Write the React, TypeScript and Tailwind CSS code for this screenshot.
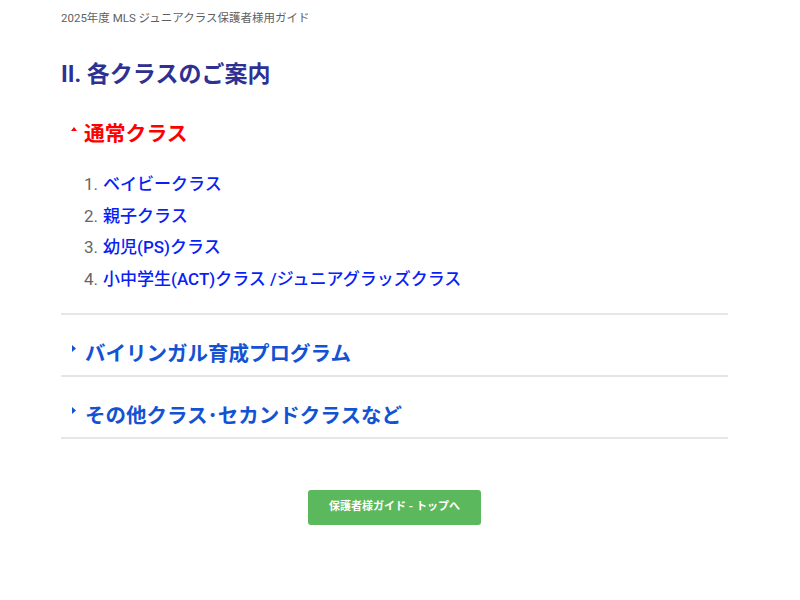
import React from "react";

const font = { fontFamily: 'Roboto, "Noto Sans CJK JP", sans-serif' };

function UpTri() {
  return (
    <svg width="6" height="4" viewBox="0 0 6 4" className="shrink-0">
      <polygon points="3,0 6,4 0,4" fill="#ff0000" />
    </svg>
  );
}
function RightTri() {
  return (
    <svg width="4" height="7" viewBox="0 0 4 7" className="shrink-0">
      <polygon points="0,0 4,3.5 0,7" fill="#1353d3" />
    </svg>
  );
}

export default function App() {
  const items = [
    "ベイビークラス",
    "親子クラス",
    "幼児(PS)クラス",
    "小中学生(ACT)クラス /ジュニアグラッズクラス",
  ];
  return (
    <div className="w-[800px] h-[600px] bg-white" style={font}>
      <div className="ml-[61px] w-[667px]">
        <div className="pt-[10px] text-[11.5px] leading-[16px] font-normal text-[#5f5f5f]">
          2025年度 MLS ジュニアクラス保護者様用ガイド
        </div>
        <h1 className="mt-[34px] text-[23px] leading-[30px] font-bold text-[#2e3192]">
          II. 各クラスのご案内
        </h1>

        <div className="mt-[29px] border-b-2 border-[#e6e6e6]">
          <div className="flex items-center gap-[7px] pl-[10px] pb-[8px]">
            <div className="-mt-[10px]"><UpTri /></div>
            <span className="text-[20.8px] leading-[30px] font-bold text-[#ff0000]">通常クラス</span>
          </div>
          <ol className="mt-[12px] pb-[17px]">
            {items.map((t, i) => (
              <li key={i} className="flex items-center h-[31.7px] text-[17px] leading-[31.7px]">
                <span className="w-[42px] text-right pr-[5px] text-[#666666]">{i + 1}.</span>
                <span className="font-medium text-[#0a1ff5]">{t}</span>
              </li>
            ))}
          </ol>
        </div>

        {["バイリンガル育成プログラム", "その他クラス･セカンドクラスなど"].map((t) => (
          <div key={t} className="border-b-2 border-[#e6e6e6]">
            <div className="flex items-center gap-[9px] pl-[11px] pt-[24px] pb-[6px]">
              <div className="-mt-[10px]"><RightTri /></div>
              <span className="text-[20.5px] leading-[30px] font-bold text-[#1353d3]">{t}</span>
            </div>
          </div>
        ))}

        <div className="mt-[51px] flex justify-center">
          <div className="w-[173px] h-[35px] rounded-[3px] bg-[#5cb85c] flex items-center justify-center text-white text-[11px] font-bold">
            保護者様ガイド - トップへ
          </div>
        </div>
      </div>
    </div>
  );
}
